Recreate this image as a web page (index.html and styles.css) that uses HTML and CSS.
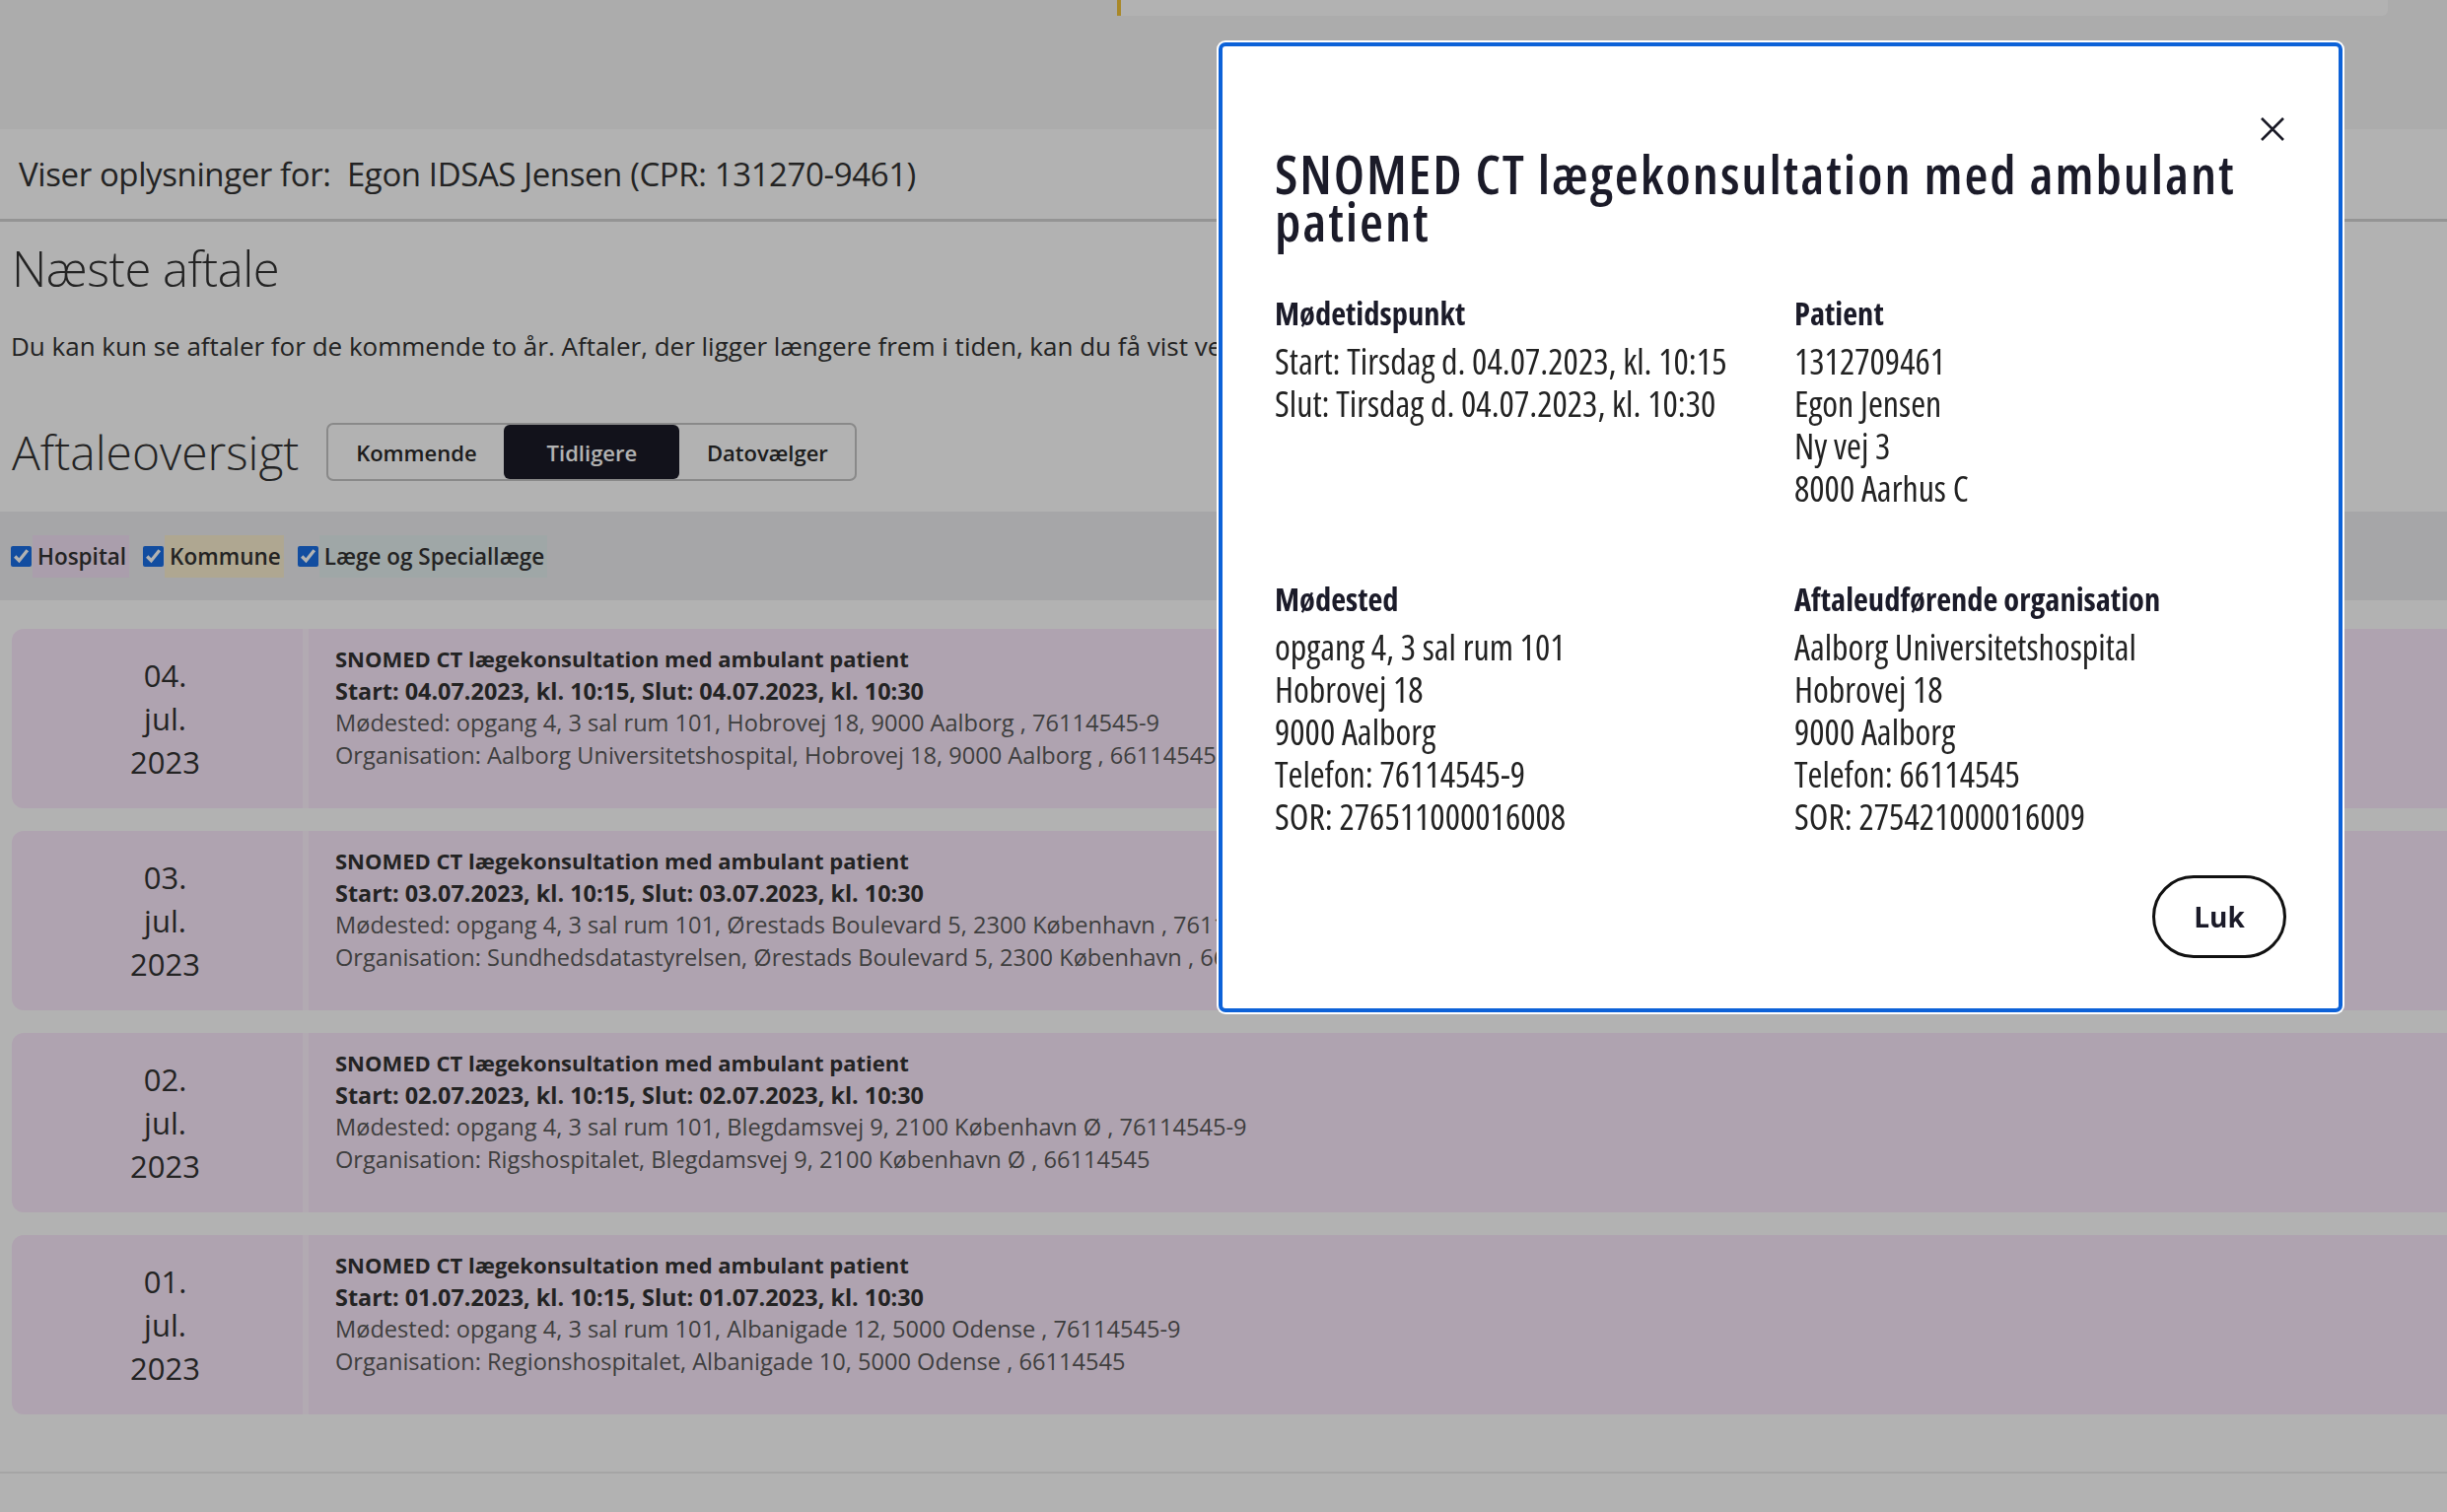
FILE: index.html
```html
<!DOCTYPE html>
<html lang="da">
<head>
    <meta charset="UTF-8">
    <meta name="viewport" content="width=device-width, initial-scale=1.0">
    <title>Aftaleoversigt</title>
    <link rel="stylesheet" href="styles.css">
</head>
<body>
    <div class="page">
        <header class="topbar">
            <div class="topbar-card"></div>
        </header>

        <div class="patient-bar">Viser oplysninger for:&nbsp; Egon IDSAS Jensen (CPR: 131270-9461)</div>

        <main class="content">
            <h1 class="page-title">Næste aftale</h1>
            <p class="note">Du kan kun se aftaler for de kommende to år. Aftaler, der ligger længere frem i tiden, kan du få vist ved at bruge datovælgeren.</p>

            <div class="overview-head">
                <h2 class="overview-title">Aftaleoversigt</h2>
                <div class="seg">
                    <button class="seg-btn">Kommende</button>
                    <button class="seg-btn active">Tidligere</button>
                    <button class="seg-btn">Datovælger</button>
                </div>
            </div>

            <div class="filters">
                <label class="filter"><input type="checkbox" checked><span class="tag tag-hospital">Hospital</span></label>
                <label class="filter"><input type="checkbox" checked><span class="tag tag-kommune">Kommune</span></label>
                <label class="filter"><input type="checkbox" checked><span class="tag tag-laege">Læge og Speciallæge</span></label>
            </div>

            <ul class="appointments">
                <li class="appt">
                    <div class="appt-date">04.<br>jul.<br>2023</div>
                    <div class="appt-body">
                        <div class="appt-title">SNOMED CT lægekonsultation med ambulant patient</div>
                        <div class="appt-time">Start: 04.07.2023, kl. 10:15, Slut: 04.07.2023, kl. 10:30</div>
                        <div>Mødested: opgang 4, 3 sal rum 101, Hobrovej 18, 9000 Aalborg , 76114545-9</div>
                        <div>Organisation: Aalborg Universitetshospital, Hobrovej 18, 9000 Aalborg , 66114545</div>
                    </div>
                </li>
                <li class="appt">
                    <div class="appt-date">03.<br>jul.<br>2023</div>
                    <div class="appt-body">
                        <div class="appt-title">SNOMED CT lægekonsultation med ambulant patient</div>
                        <div class="appt-time">Start: 03.07.2023, kl. 10:15, Slut: 03.07.2023, kl. 10:30</div>
                        <div>Mødested: opgang 4, 3 sal rum 101, Ørestads Boulevard 5, 2300 København , 76114545-9</div>
                        <div>Organisation: Sundhedsdatastyrelsen, Ørestads Boulevard 5, 2300 København , 66114545</div>
                    </div>
                </li>
                <li class="appt">
                    <div class="appt-date">02.<br>jul.<br>2023</div>
                    <div class="appt-body">
                        <div class="appt-title">SNOMED CT lægekonsultation med ambulant patient</div>
                        <div class="appt-time">Start: 02.07.2023, kl. 10:15, Slut: 02.07.2023, kl. 10:30</div>
                        <div>Mødested: opgang 4, 3 sal rum 101, Blegdamsvej 9, 2100 København Ø , 76114545-9</div>
                        <div>Organisation: Rigshospitalet, Blegdamsvej 9, 2100 København Ø , 66114545</div>
                    </div>
                </li>
                <li class="appt">
                    <div class="appt-date">01.<br>jul.<br>2023</div>
                    <div class="appt-body">
                        <div class="appt-title">SNOMED CT lægekonsultation med ambulant patient</div>
                        <div class="appt-time">Start: 01.07.2023, kl. 10:15, Slut: 01.07.2023, kl. 10:30</div>
                        <div>Mødested: opgang 4, 3 sal rum 101, Albanigade 12, 5000 Odense , 76114545-9</div>
                        <div>Organisation: Regionshospitalet, Albanigade 10, 5000 Odense , 66114545</div>
                    </div>
                </li>
            </ul>
        </main>

        <footer class="footer"></footer>
    </div>

    <!-- modal -->
    <div class="backdrop"></div>
    <div class="modal" role="dialog" aria-labelledby="modal-title">
        <div class="modal-top">
            <button class="modal-close" aria-label="Luk">
                <svg width="26" height="26" viewBox="0 0 26 26"><path d="M2 2 L24 24 M24 2 L2 24" stroke="#1c1c28" stroke-width="2.6" fill="none"/></svg>
            </button>
        </div>
        <h2 class="modal-title" id="modal-title">SNOMED CT lægekonsultation med ambulant patient</h2>

        <div class="modal-grid">
            <div class="info">
                <h3>Mødetidspunkt</h3>
                <div>Start: Tirsdag d. 04.07.2023, kl. 10:15</div>
                <div>Slut: Tirsdag d. 04.07.2023, kl. 10:30</div>
            </div>
            <div class="info">
                <h3>Patient</h3>
                <div>1312709461</div>
                <div>Egon Jensen</div>
                <div>Ny vej 3</div>
                <div>8000 Aarhus C</div>
            </div>
            <div class="info">
                <h3>Mødested</h3>
                <div>opgang 4, 3 sal rum 101</div>
                <div>Hobrovej 18</div>
                <div>9000 Aalborg</div>
                <div>Telefon: 76114545-9</div>
                <div>SOR: 276511000016008</div>
            </div>
            <div class="info">
                <h3>Aftaleudførende organisation</h3>
                <div>Aalborg Universitetshospital</div>
                <div>Hobrovej 18</div>
                <div>9000 Aalborg</div>
                <div>Telefon: 66114545</div>
                <div>SOR: 275421000016009</div>
            </div>
        </div>

        <div class="modal-actions">
            <button class="btn-close">Luk</button>
        </div>
    </div>
</body>
</html>
```
FILE: styles.css
```css
* {
    margin: 0;
    padding: 0;
    box-sizing: border-box;
}

body {
    font-family: "Open Sans", "Noto Sans", sans-serif;
    background: #ffffff;
    color: #333;
    overflow: hidden;
    height: 100vh;
}

/* page behind the dialog */
.topbar {
    height: 131px;
    background: #f7f7f7;
    display: grid;
    grid-template-columns: 1133px 1fr 60px;
}

.topbar-card {
    grid-column: 2;
    height: 16px;
    background: #ffffff;
    border-left: 4px solid #f2c33a;
    border-bottom-right-radius: 6px;
}

.patient-bar {
    height: 94px;
    padding: 0 19px;
    display: flex;
    align-items: center;
    font-size: 33px;
    letter-spacing: -0.4px;
    color: #333;
    border-bottom: 3px solid #d4d4d4;
    background: #ffffff;
}

.content {
    padding-top: 15px;
}

.page-title {
    font-size: 49px;
    font-weight: 300;
    letter-spacing: -0.5px;
    line-height: 64px;
    color: #333;
    padding-left: 12px;
}

.note {
    margin-top: 29px;
    font-size: 26px;
    line-height: 36px;
    color: #333;
    padding-left: 11px;
    white-space: nowrap;
}

.overview-head {
    margin-top: 60px;
    display: flex;
    align-items: center;
    gap: 28px;
    padding-left: 12px;
}

.overview-title {
    font-size: 48px;
    font-weight: 300;
    color: #333;
    line-height: 59px;
}

.seg {
    display: flex;
    height: 59px;
    border: 2px solid #c4c4c4;
    border-radius: 7px;
    background: #fff;
}

.seg-btn {
    width: 178px;
    border: none;
    background: none;
    font-family: inherit;
    font-size: 22px;
    font-weight: 600;
    color: #2a2a2a;
    border-radius: 6px;
}

.seg-btn.active {
    background: #1b1b28;
    color: #fff;
}

.filters {
    margin-top: 31px;
    height: 90px;
    background: #eeeef1;
    display: flex;
    align-items: center;
    padding-left: 11px;
    gap: 14px;
}

.filter {
    display: flex;
    align-items: center;
    gap: 1px;
}

.filter input {
    width: 21px;
    height: 21px;
    margin: 0;
    accent-color: #1a6fe6;
}

.tag {
    font-size: 22.5px;
    font-weight: 600;
    color: #333;
    line-height: 43px;
    padding: 0 3px 0 5px;
}

.tag-hospital { background: #f4e3f6; }
.tag-kommune { background: #fbefd0; }
.tag-laege { background: #e4eff0; }

.appointments {
    list-style: none;
    margin-top: 29px;
    padding-left: 12px;
    display: flex;
    flex-direction: column;
    gap: 23px;
}

.appt {
    display: flex;
    height: 182px;
    background: #fbeafd;
    border-radius: 12px 0 0 12px;
}

.appt-date {
    width: 295px;
    padding-left: 16px;
    display: flex;
    align-items: center;
    justify-content: center;
    text-align: center;
    font-size: 31px;
    line-height: 44px;
    color: #333;
}

.appt-body {
    flex: 1;
    border-left: 6px solid #fff4ff;
    padding: 14px 0 0 27px;
    font-size: 23.6px;
    line-height: 32.5px;
    color: #5a5a5a;
    white-space: nowrap;
}

.appt-title,
.appt-time {
    font-weight: 700;
    color: #333;
}

.appt-title {
    font-size: 22px;
}

.appt-time {
    font-size: 23.4px;
}

.footer {
    margin-top: 58px;
    border-top: 2px solid #ececec;
}

/* dialog */
.backdrop {
    position: fixed;
    inset: 0;
    background: rgba(0, 0, 0, 0.3);
}

.modal {
    position: fixed;
    top: 43px;
    left: 1236px;
    width: 1140px;
    background: #fff;
    border: 4px solid #0d62d8;
    border-radius: 7px;
    box-shadow: 0 0 0 2px #fff;
    padding: 72px 53px 51px 53px;
    font-stretch: 75%;
    color: #1f1f2a;
}

.modal-top {
    display: flex;
    justify-content: flex-end;
    height: 24px;
    padding-right: 1px;
}

.modal-close {
    width: 26px;
    height: 26px;
    border: none;
    background: none;
    margin-top: -1px;
}

.modal-title {
    margin-top: 9px;
    font-size: 55px;
    font-weight: 600;
    letter-spacing: 1.9px;
    line-height: 48px;
    color: #1b1b29;
}

.modal-grid {
    margin-top: 48px;
    display: grid;
    grid-template-columns: 527px 1fr;
    row-gap: 69px;
}

.info {
    font-size: 36px;
    line-height: 43px;
    color: #222;
}

.info h3 {
    font-size: 32.5px;
    font-weight: 700;
    line-height: 43px;
    margin-bottom: 6px;
    color: #1b1b29;
}

.modal-actions {
    margin-top: 38px;
    display: flex;
    justify-content: flex-end;
}

.btn-close {
    width: 136px;
    height: 84px;
    border: 3px solid #111;
    border-radius: 42px;
    background: #fff;
    font-family: inherit;
    font-size: 28px;
    font-weight: 700;
    font-stretch: 100%;
    color: #1b1b29;
}
```
